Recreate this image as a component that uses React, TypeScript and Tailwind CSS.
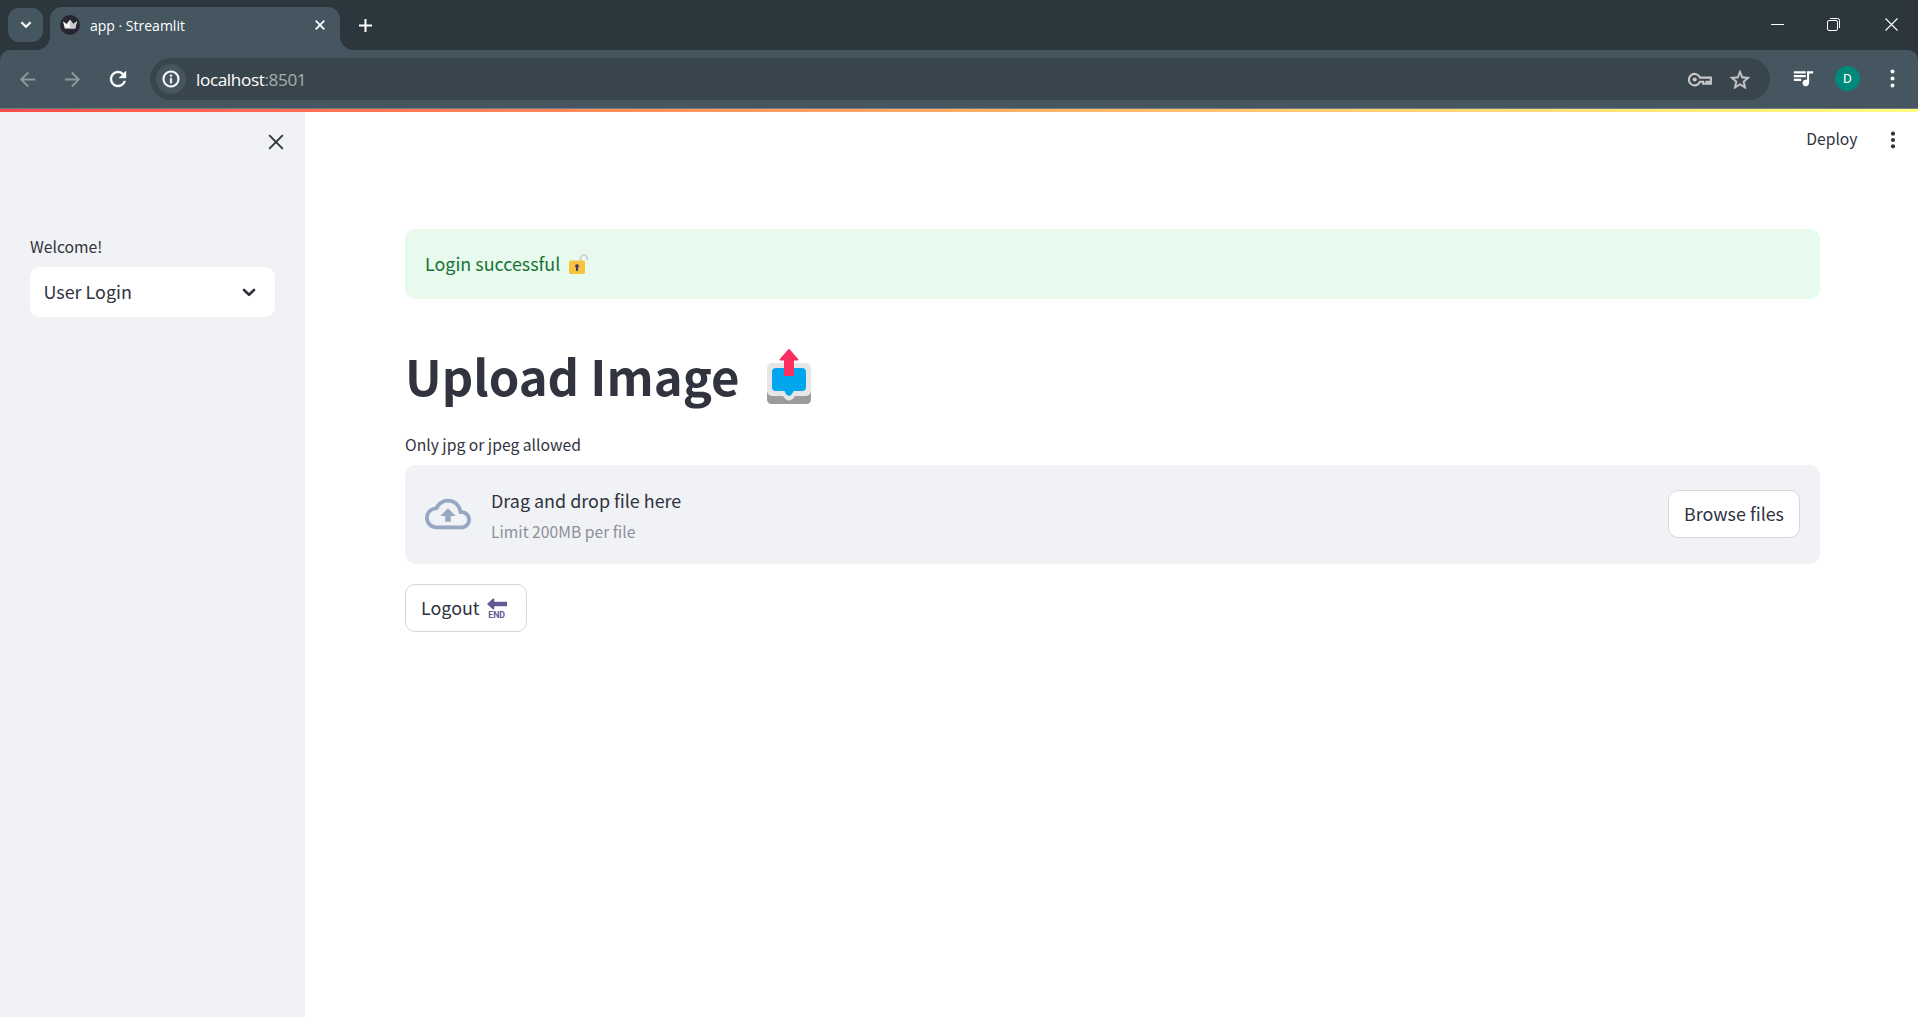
import type { ReactNode } from "react";

function Glyph({ size, box = "0 0 24 24", className = "", children }: { size: number; box?: string; className?: string; children: ReactNode }) {
  return (
    <svg width={size} height={size} viewBox={box} className={`shrink-0 ${className}`} fill="currentColor">
      {children}
    </svg>
  );
}

function TitleBar() {
  return (
    <div className="flex h-[50px] items-start bg-[#2c373d] text-white">
      <button className="mt-2 ml-2 flex h-[34px] w-[35px] items-center justify-center rounded-[11px] bg-[#455660]">
        <svg width="12" height="8" viewBox="0 0 12 8" fill="none" stroke="white" strokeWidth="2.2">
          <path d="M1.4 1.2 6 5.8l4.6-4.6" />
        </svg>
      </button>
      <div className="relative ml-[7px] flex h-[43px] w-[290px] items-center self-end rounded-t-[12px] bg-[#455660] pb-[7px]">
        <svg className="absolute bottom-0 -left-[14px] text-[#455660]" width="14" height="14" viewBox="0 0 14 14" fill="currentColor">
          <path d="M14 0v14H0C8 14 14 8 14 0z" />
        </svg>
        <svg className="absolute -right-[14px] bottom-0 text-[#455660]" width="14" height="14" viewBox="0 0 14 14" fill="currentColor">
          <path d="M0 0v14h14C6 14 0 8 0 0z" />
        </svg>
        <Glyph size={20} box="0 0 20 20" className="ml-[10px]">
          <circle cx="10" cy="10" r="10" fill="#262730" />
          <path d="M3 6.2 6.6 9 10 4.8 13.4 9 17 6.2 15.2 13.6H4.8z" fill="#f2f2f2" />
          <path d="M10 4.8 13.4 9 17 6.2 15.2 13.6H10z" fill="#c9c9cc" />
        </Glyph>
        <span className="mt-[2px] ml-[10px] font-['Open_Sans'] text-[14px] leading-5 whitespace-pre">app · Streamlit</span>
        <svg className="absolute top-[13px] left-[265px]" width="10" height="10" viewBox="0 0 10 10" stroke="white" strokeWidth="1.8">
          <path d="m.7.7 8.6 8.6M9.3.7.7 9.3" />
        </svg>
      </div>
      <svg className="mt-[18.5px] ml-[19px]" width="13" height="13" viewBox="0 0 13 13" stroke="white" strokeWidth="2">
        <path d="M6.5 0v13M0 6.5h13" />
      </svg>
      <div className="mt-[18px] mr-5 ml-auto flex gap-[43px]">
        <svg width="13" height="13" viewBox="0 0 13 13" stroke="white">
          <path d="M0 6.5h13" />
        </svg>
        <svg className="mr-[2px]" width="13" height="13" viewBox="0 0 13 13" fill="none" stroke="white">
          <rect x=".5" y="2.5" width="10" height="10" rx="1.5" />
          <path d="M3 .5h7.5a2 2 0 0 1 2 2V10" />
        </svg>
        <svg width="13" height="13" viewBox="0 0 13 13" stroke="white" strokeWidth="1.1">
          <path d="m.5.5 12 12M12.5.5l-12 12" />
        </svg>
      </div>
    </div>
  );
}

function Toolbar() {
  return (
    <div className="bg-[#2c373d]">
      <div className="flex h-[59px] items-start rounded-t-[10px] border-b border-[#707d84] bg-[#455660] pt-2 text-white">
        <div className="flex h-[42px] w-[150px] items-center pl-[16px]">
          <Glyph size={23} className="text-[#8d979d]">
            <path d="M20 11H7.830l5.590-5.590L12 4l-8 8 8 8 1.410-1.410L7.830 13H20v-2z" />
          </Glyph>
          <Glyph size={23} className="ml-[22px] text-[#8d979d]">
            <path d="m12 4-1.410 1.410L16.170 11H4v2h12.170l-5.580 5.590L12 20l8-8z" />
          </Glyph>
          <Glyph size={24} className="ml-[22px]">
            <path
              stroke="currentColor"
              strokeWidth=".4"
              d="M17.650 6.350A7.958 7.958 0 0 0 12 4a8 8 0 1 0 7.730 10h-2.080A5.990 5.990 0 0 1 12 18c-3.310 0-6-2.690-6-6s2.690-6 6-6c1.660 0 3.140.69 4.220 1.780L13 11h7V4l-2.350 2.350z"
            />
          </Glyph>
        </div>
        <div className="flex h-[42px] w-[1620px] items-center rounded-full bg-[#39454c] pr-[18px] pl-[6px]">
          <div className="flex size-[30px] items-center justify-center rounded-full bg-[#455660]">
            <Glyph size={20}>
              <path
                stroke="currentColor"
                strokeWidth=".5"
                d="M11 7h2v2h-2zm0 4h2v6h-2zm1-9a10 10 0 1 0 0 20 10 10 0 0 0 0-20zm0 18a8 8 0 1 1 0-16 8 8 0 0 1 0 16z"
              />
            </Glyph>
          </div>
          <div className="mt-px ml-[10px] font-['Open_Sans'] text-[17.2px] leading-6 tracking-[-0.4px]">
            localhost<span className="text-[#a5adb1]">:8501</span>
          </div>
          <svg className="mt-px ml-auto text-[#c7c7c7]" width="24" height="15" viewBox="0 0 23 14" fill="none" stroke="currentColor" strokeWidth="2">
            <path d="M11.500 5.200h10.400v5.800h-2.200v-1.900h-2v1.900h-3.200v-1.900h-3A5.500 5.500 0 1 1 11.500 5.200z" />
            <circle cx="6.400" cy="7" r="2" fill="currentColor" stroke="none" />
          </svg>
          <Glyph size={24} className="mt-px ml-[16px] text-[#c7c7c7]">
            <path
              stroke="currentColor"
              strokeWidth=".4"
              d="m22 9.240-7.190-.62L12 2 9.190 8.630 2 9.240l5.460 4.730L5.820 21 12 17.270 18.180 21l-1.630-7.030L22 9.240zM12 15.400l-3.760 2.270 1-4.280-3.320-2.880 4.380-.38L12 6.100l1.710 4.040 4.380.38-3.320 2.880 1 4.280L12 15.400z"
            />
          </Glyph>
        </div>
        <div className="flex h-[41px] items-center">
          <Glyph size={22} className="mb-[2px] ml-[22px]">
            <path d="M15 4.500H2v2.500h13zm0 4.200H2v2.500h13zM2 15.400h8v-2.500H2zM16.300 4.500v9.500a3.600 3.600 0 1 0 2.400 3.300V7.200H23V4.500z" />
          </Glyph>
          <div className="ml-[21px] flex size-[25px] items-center justify-center rounded-full bg-[#00897b] font-['Roboto'] text-[13.5px]">D</div>
          <Glyph size={25} className="ml-5">
            <circle cx="12" cy="5.300" r="1.900" />
            <circle cx="12" cy="12" r="1.900" />
            <circle cx="12" cy="18.700" r="1.900" />
          </Glyph>
        </div>
      </div>
    </div>
  );
}

function Sidebar() {
  return (
    <aside className="flex w-[305px] flex-col bg-[#f0f2f6] px-[30px] pt-[21.5px]">
      <svg className="mr-[-8.5px] self-end" width="16" height="16" viewBox="0 0 16 16" stroke="#31333f" strokeWidth="1.9">
        <path d="m1.200 1.200 13.600 13.600M14.800 1.200 1.200 14.800" />
      </svg>
      <label className="mt-[84.5px] text-[15.7px] leading-[26px]">Welcome!</label>
      <div className="mt-[7px] flex h-[50px] items-center justify-between rounded-[10px] bg-white pr-[19px] pl-[13.5px]">
        <span className="mb-[2px] text-[17.9px] leading-8">User Login</span>
        <svg width="14" height="9" viewBox="0 0 14 9" fill="none" stroke="#31333f" strokeWidth="2.6" strokeLinecap="round" strokeLinejoin="round">
          <path d="m2 2 5 4.800L12 2" />
        </svg>
      </div>
    </aside>
  );
}

function UnlockedEmoji() {
  return (
    <svg width="20" height="21" viewBox="0 0 20 21">
      <path d="M11.500 7V4.500a3.400 3.400 0 0 1 6.800 0V6" fill="none" stroke="#d3d3d3" strokeWidth="2" />
      <rect x="0" y="6.500" width="16" height="13.500" rx="1.800" fill="#f9c23c" />
      <path d="M8 10.200a1.900 1.900 0 0 1 1 3.500V17H7v-3.300a1.900 1.900 0 0 1 1-3.500z" fill="#433b6b" />
    </svg>
  );
}

function OutboxEmoji() {
  return (
    <svg width="44" height="56" viewBox="0 0 44 56">
      <path d="M0 38h44v12.500a4.500 4.500 0 0 1-4.500 4.500h-35A4.500 4.500 0 0 1 0 50.500z" fill="#9b9b9b" />
      <path d="M5 14h34a5 5 0 0 1 5 5v23a5 5 0 0 1-5 5H28c-1.500 2.700-3.500 4.500-6 4.500S17.500 49.700 16 47H5a5 5 0 0 1-5-5V19a5 5 0 0 1 5-5z" fill="#e6e6e6" />
      <path d="M9 19h26a4 4 0 0 1 4 4v15a4 4 0 0 1-4 4h-8.500c-1.200 3-2.500 4.800-4.500 4.800s-3.300-1.800-4.500-4.800H9a4 4 0 0 1-4-4V23a4 4 0 0 1 4-4z" fill="#00a6ed" />
      <path d="M17 27V11.500h-3.500c-.9 0-1.300-.8-.7-1.500l8.100-9.200a1.400 1.400 0 0 1 2.200 0l8 9.200c.6.700.2 1.500-.7 1.500H27V27z" fill="#fb2f60" />
    </svg>
  );
}

function EndEmoji() {
  return (
    <span className="flex w-5 flex-col items-center">
      <svg width="20" height="12" viewBox="0 0 20 12" fill="#635994">
        <path d="M0 6 6 .6c.5-.5 1.300-.1 1.300.6v2.600H20v4.400H7.300v2.600c0 .7-.8 1.100-1.300.6z" />
      </svg>
      <span className="mt-px h-2 font-['Roboto'] text-[8.8px] leading-2 font-bold tracking-[-0.1px] text-[#635994]">END</span>
    </span>
  );
}

function Main() {
  return (
    <main className="flex flex-1 flex-col">
      <header className="flex h-[55px] items-center justify-end">
        <span className="mb-px text-[15.7px] leading-6">Deploy</span>
        <Glyph size={20} className="mr-[15.5px] ml-[25px] text-[#31333f]">
          <circle cx="12" cy="4.400" r="2.500" />
          <circle cx="12" cy="12" r="2.500" />
          <circle cx="12" cy="19.600" r="2.500" />
        </Glyph>
      </header>
      <section className="mt-[62px] mr-[98px] ml-[100px] flex flex-col">
        <div className="flex h-[70px] items-center rounded-[10px] bg-[#e8f9ee] pl-5 text-[17.9px] text-[#177233]">
          <span className="mb-[2px]">Login successful</span>
          <span className="ml-[9px]">
            <UnlockedEmoji />
          </span>
        </div>
        <div className="mt-[43px] flex h-[66px] items-center">
          <h1 className="text-[49px] leading-[66px] font-bold">Upload Image</h1>
          <span className="mt-[4px] ml-[28px]">
            <OutboxEmoji />
          </span>
        </div>
        <p className="mt-[24px] text-[15.7px] leading-[26px]">Only jpg or jpeg allowed</p>
        <div className="mt-[7px] flex h-[99px] items-center rounded-[10px] bg-[#f0f2f6] px-5 pb-px">
          <Glyph size={46} className="text-[#97a6c3]">
            <path d="M19.350 10.040A7.490 7.490 0 0 0 12 4C9.110 4 6.600 5.640 5.350 8.040A5.994 5.994 0 0 0 0 14c0 3.310 2.690 6 6 6h13c2.760 0 5-2.240 5-5 0-2.640-2.050-4.780-4.650-4.960zM19 18H6c-2.210 0-4-1.790-4-4 0-2.050 1.530-3.760 3.560-3.970l1.070-.11.5-.95A5.469 5.469 0 0 1 12 6c2.620 0 4.880 1.860 5.390 4.430l.3 1.500 1.530.11A2.980 2.980 0 0 1 22 15c0 1.650-1.350 3-3 3zM8 13h2.550v3h2.900v-3H16l-4-4z" />
          </Glyph>
          <div className="mt-[2px] ml-[20px] flex flex-col">
            <span className="text-[17.93px] leading-8">Drag and drop file here</span>
            <span className="text-[15.7px] leading-[31px] text-[#8d909b]">Limit 200MB per file</span>
          </div>
          <button className="ml-auto flex h-12 w-[132px] items-center justify-center rounded-[10px] border border-[#d6d6d9] bg-white pb-[2px] text-[17.9px]">Browse files</button>
        </div>
        <button className="mt-5 flex h-12 w-[122px] items-center rounded-[10px] border border-[#d6d6d9] bg-white pl-[15px] text-[17.9px]">
          <span className="mb-[2px]">Logout</span>
          <span className="ml-[7px]">
            <EndEmoji />
          </span>
        </button>
      </section>
    </main>
  );
}

export default function App() {
  return (
    <div className="flex h-[1017px] w-full flex-col overflow-hidden bg-white font-['Noto_Sans_CJK_SC',sans-serif] text-[#31333f]">
      <TitleBar />
      <Toolbar />
      <div className="h-[3px] bg-linear-to-r from-[#ff4b4b] to-[#fffd80]" />
      <div className="flex flex-1">
        <Sidebar />
        <Main />
      </div>
    </div>
  );
}
